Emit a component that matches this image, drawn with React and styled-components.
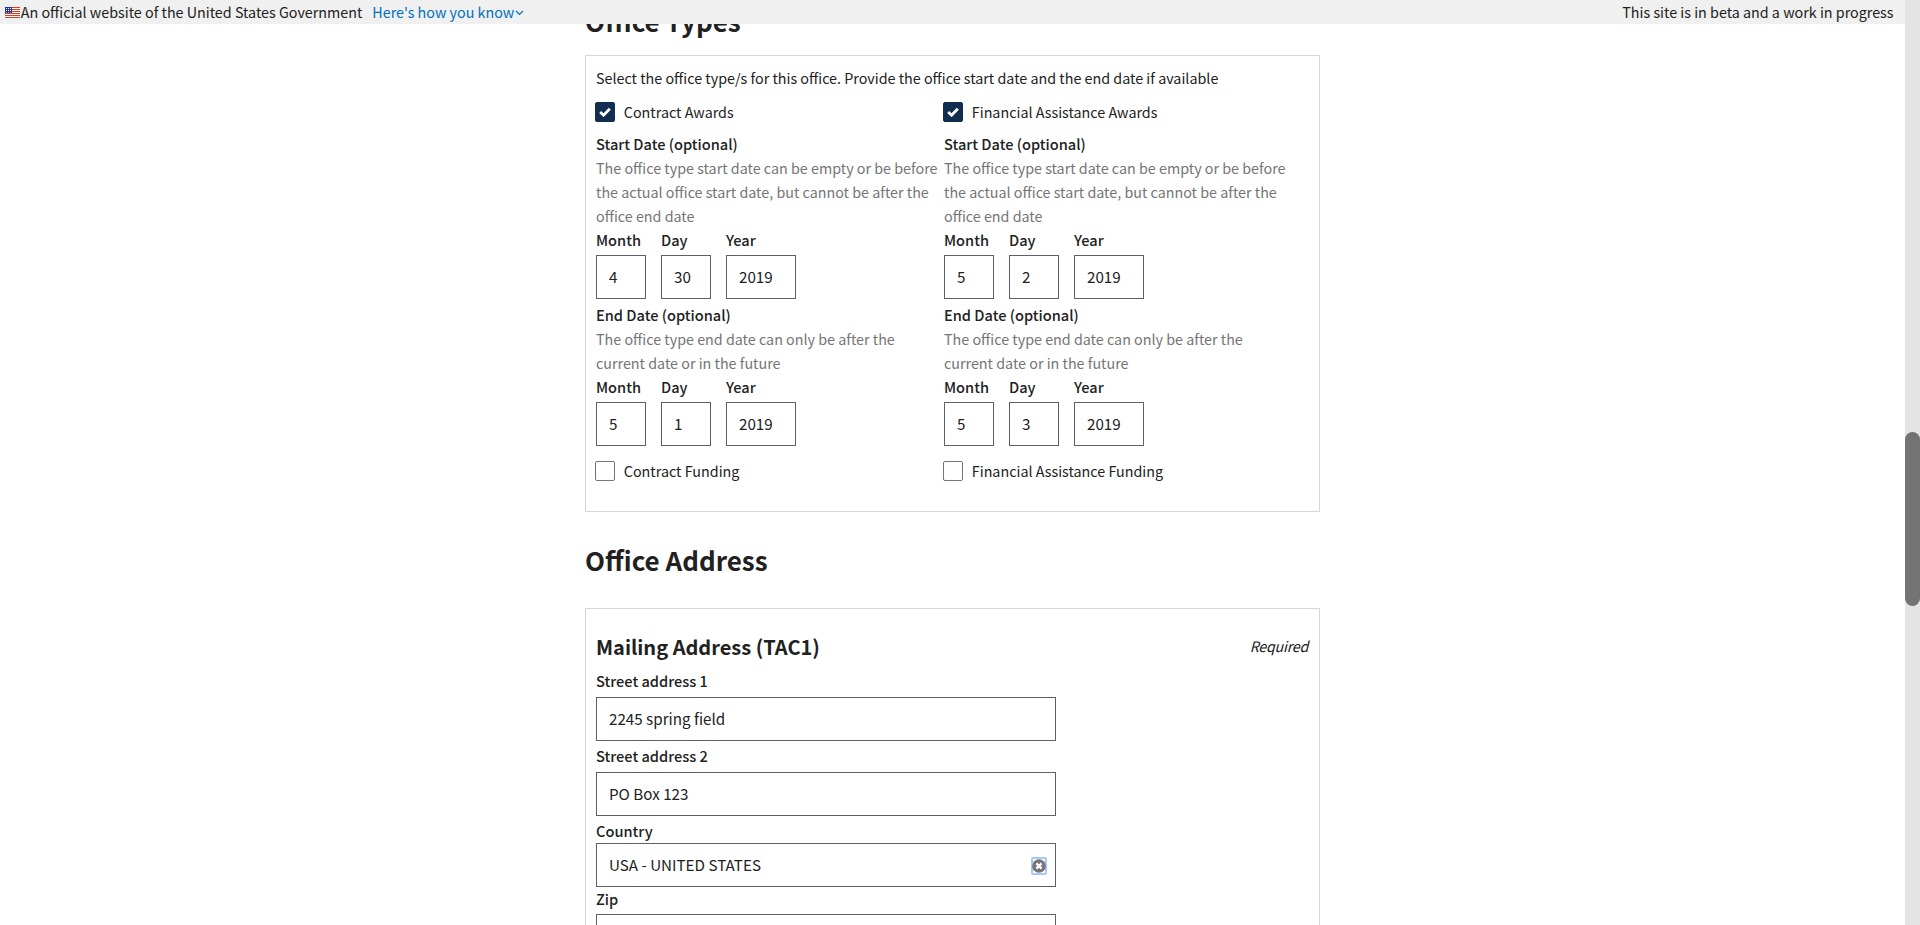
import React from "react";
import styled, { createGlobalStyle } from "styled-components";

const GlobalStyle = createGlobalStyle`
  * { box-sizing: border-box; }
  body {
    margin: 0;
    background: #fff;
    color: #212121;
    font-family: "Source Sans Pro", "Noto Sans CJK SC", sans-serif;
    font-size: 14.32px;
    line-height: 24px;
  }
`;

const Screen = styled.div`
  display: grid;
  grid-template-columns: 1fr 15px;
  height: 925px;
  overflow: hidden;
`;

const Banner = styled.header`
  position: fixed;
  top: 0;
  left: 0;
  right: 15px;
  z-index: 1;
  display: flex;
  align-items: center;
  height: 24px;
  padding: 0 11.5px 0 5px;
  background: #f0f0f0;
  svg { flex: none; }
`;

const BannerText = styled.span`
  margin-left: 0.8px;
`;

const BannerLink = styled.a`
  display: flex;
  align-items: center;
  margin-left: 10px;
  color: #0071bc;
  svg { margin: 2px 0 0 1px; }
`;

const BetaNote = styled.span`
  margin-left: auto;
`;

const Track = styled.div`
  background: #e4e4e4;
  padding-top: 432px;
`;

const Thumb = styled.div`
  height: 174px;
  border-radius: 7.5px;
  background: #737373;
`;

const Main = styled.main`
  height: 925px;
  overflow: hidden;
  padding-left: 585px;
`;

const SectionTitle = styled.h2`
  margin: 0;
  height: ${(p) => p.$height}px;
  padding-top: ${(p) => p.$top}px;
  font-size: 26px;
  line-height: 36px;
  font-weight: 700;
`;

const Card = styled.section`
  width: 735px;
  height: ${(p) => p.$height}px;
  padding: ${(p) => p.$top}px 10px 0;
  border: 1px solid #d6d7d9;
`;

const Columns = styled.div`
  display: grid;
  grid-template-columns: 348px 348px;
`;

const Column = styled.div`
  display: flex;
  flex-direction: column;
`;

const CheckRow = styled.label`
  display: flex;
  align-items: center;
  gap: 8.8px;
  height: 20px;
  margin-left: -1px;
`;

const Box = styled.span`
  display: flex;
  align-items: center;
  justify-content: center;
  width: 20px;
  height: 20px;
  border-radius: 2px;
  border: 1px solid ${(p) => (p.$checked ? "#112e51" : "#757575")};
  background: ${(p) => (p.$checked ? "#112e51" : "#fff")};
`;

const DateGroup = styled.fieldset`
  margin: ${(p) => p.$top}px 0 0;
  padding: 0;
  border: 0;
  min-width: 0;
`;

const Label = styled.div`
  font-size: 14.6px;
  font-weight: 500;
  line-height: 24px;
`;

const Hint = styled.div`
  color: #757575;
  white-space: nowrap;
`;

const DateFields = styled.div`
  display: flex;
  gap: 15px;
`;

const Input = styled.input`
  display: block;
  width: ${(p) => p.$width}px;
  height: 44px;
  margin-top: ${(p) => p.$gap}px;
  padding: 0 12px 2px;
  border: 1px solid #5b616b;
  border-radius: 0;
  background: #fff;
  color: #212121;
  font: inherit;
  font-size: 15.2px;
  outline: none;
`;

const AddressHead = styled.div`
  display: flex;
  justify-content: space-between;
  align-items: center;
  height: 30px;
  margin-bottom: 7px;
`;

const AddressTitle = styled.h3`
  margin: 0;
  font-size: 20px;
  font-weight: 700;
`;

const Required = styled.em`
  padding: 0 1px 2px 0;
  font-style: italic;
  letter-spacing: -0.28px;
`;

const Field = styled.div`
  width: 460px;
  height: ${(p) => p.$height}px;
`;

const Combo = styled.div`
  position: relative;
`;

const Clear = styled.button`
  position: absolute;
  top: 14px;
  right: 9px;
  display: flex;
  align-items: center;
  justify-content: center;
  width: 16px;
  height: 18px;
  padding: 0;
  border: 2px solid #a3c7ff;
  border-radius: 2px;
  background: #fff;
  svg { flex: none; }
`;

function Flag() {
  return (
    <svg width="15" height="11" viewBox="0 0 15 11" shapeRendering="crispEdges">
      <rect width="15" height="11" fill="#fff" />
      {[0, 2, 4, 6, 8, 10].map((y) => (
        <rect key={y} y={y} width="15" height="1" fill="#db3e1f" />
      ))}
      <rect width="7" height="6" fill="#1e33b1" />
      {[1, 3, 5].map((x) => (
        <g key={x} fill="#fff">
          <rect x={x} y="1" width="1" height="1" />
          <rect x={x} y="3" width="1" height="1" />
          <rect x={x} y="5" width="1" height="1" opacity=".5" />
        </g>
      ))}
    </svg>
  );
}

function Check({ label, checked }) {
  return (
    <CheckRow>
      <Box $checked={checked}>
        {checked && (
          <svg width="12" height="10" viewBox="0 0 12 10">
            <path d="M1.2 5 4.6 8.2 10.8 1.8" fill="none" stroke="#fff" strokeWidth="2.8" />
          </svg>
        )}
      </Box>
      {label}
    </CheckRow>
  );
}

function DateInput({ title, hint, top, value }) {
  const names = ["Month", "Day", "Year"];
  return (
    <DateGroup $top={top}>
      <Label>{title}</Label>
      {hint.map((line) => (
        <Hint key={line}>{line}</Hint>
      ))}
      <DateFields>
        {names.map((name, i) => (
          <div key={name}>
            <Label>{name}</Label>
            <Input $width={i === 2 ? 70 : 50} $gap={3} defaultValue={value[i]} />
          </div>
        ))}
      </DateFields>
    </DateGroup>
  );
}

const startHint = [
  "The office type start date can be empty or be before",
  "the actual office start date, but cannot be after the",
  "office end date",
];
const endHint = ["The office type end date can only be after the", "current date or in the future"];

const FundingRow = styled.div`
  margin-top: 15px;
`;

const Intro = styled.div`
  height: 36px;
`;

function OfficeType({ name, funding, start, end }) {
  return (
    <Column>
      <Check label={name} checked />
      <DateInput title="Start Date (optional)" hint={startHint} top={10} value={start} />
      <DateInput title="End Date (optional)" hint={endHint} top={4} value={end} />
      <FundingRow>
        <Check label={funding} />
      </FundingRow>
    </Column>
  );
}

export default function App() {
  return (
    <>
      <GlobalStyle />
      <Screen>
        <Banner>
          <Flag />
          <BannerText>An official website of the United States Government</BannerText>
          <BannerLink>
            Here's how you know
            <svg width="9" height="6" viewBox="0 0 9 6">
              <path d="M1 1 4.5 4.5 8 1" fill="none" stroke="#0071bc" strokeWidth="1.2" />
            </svg>
          </BannerLink>
          <BetaNote>This site is in beta and a work in progress</BetaNote>
        </Banner>
        <Main>
          <SectionTitle $top={3} $height={55}>Office Types</SectionTitle>
          <Card $top={10} $height={457}>
            <Intro>
              Select the office type/s for this office. Provide the office start date and the end date if available
            </Intro>
            <Columns>
              <OfficeType
                name="Contract Awards"
                funding="Contract Funding"
                start={["4", "30", "2019"]}
                end={["5", "1", "2019"]}
              />
              <OfficeType
                name="Financial Assistance Awards"
                funding="Financial Assistance Funding"
                start={["5", "2", "2019"]}
                end={["5", "3", "2019"]}
              />
            </Columns>
          </Card>
          <SectionTitle $top={30} $height={96}>Office Address</SectionTitle>
          <Card $top={23} $height={600}>
            <AddressHead>
              <AddressTitle>Mailing Address (TAC1)</AddressTitle>
              <Required>Required</Required>
            </AddressHead>
            <Field $height={75}>
              <Label>Street address 1</Label>
              <Input $width={460} $gap={4} defaultValue="2245 spring field" />
            </Field>
            <Field $height={75}>
              <Label>Street address 2</Label>
              <Input $width={460} $gap={4} defaultValue="PO Box 123" />
            </Field>
            <Field $height={68}>
              <Label>Country</Label>
              <Combo>
                <Input $width={460} $gap={0} defaultValue="USA - UNITED STATES" />
                <Clear aria-label="Clear country">
                  <svg width="14" height="14" viewBox="0 0 14 14">
                    <circle cx="7" cy="7" r="6.8" fill="#757575" />
                    <path d="M4.4 4.4 9.6 9.6M9.6 4.4 4.4 9.6" stroke="#fff" strokeWidth="2.4" />
                  </svg>
                </Clear>
              </Combo>
            </Field>
            <Field $height={75}>
              <Label>Zip</Label>
              <Input $width={460} $gap={3} />
            </Field>
          </Card>
        </Main>
        <Track>
          <Thumb />
        </Track>
      </Screen>
    </>
  );
}
